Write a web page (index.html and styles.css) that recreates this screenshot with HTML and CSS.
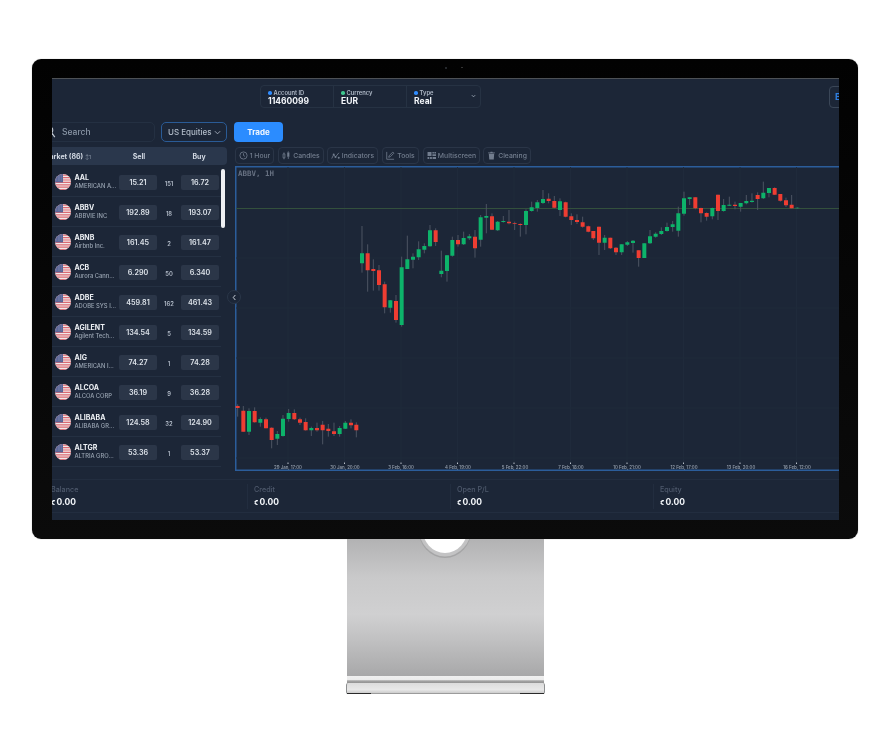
FILE: index.html
```html
<!DOCTYPE html>
<html lang="en">
<head>
<meta charset="utf-8">
<title>Trading platform on a monitor</title>
<link rel="stylesheet" href="styles.css">
</head>
<body>
<svg class="defs" width="0" height="0" aria-hidden="true">
  <defs>
    <clipPath id="flag-clip"><circle cx="8" cy="8" r="8"/></clipPath>
    <symbol id="flag" viewBox="0 0 16 16">
      <g clip-path="url(#flag-clip)">
        <rect width="16" height="16" fill="#f1e8ea"/>
        <path d="M0 1.2H16M0 3.6H16M0 6H16M0 8.4H16M0 10.8H16M0 13.2H16M0 15.6H16" stroke="#dd6a72" stroke-width="1.2"/>
        <rect width="8" height="8.4" fill="#5a6596"/>
        <path d="M1.5 2h5M1.5 4h5M1.5 6h5" stroke="#c5c8dc" stroke-width=".5" stroke-dasharray=".6 .9"/>
      </g>
    </symbol>
  </defs>
</svg>

<main class="display">
  <section class="monitor">
    <span class="camera"></span>
    <span class="sensor"></span>
    <div class="screen">
      <header class="topbar">
        <div class="account">
          <div class="account-cell">
            <div class="account-label"><i class="dot dot-blue"></i>Account ID</div>
            <div class="account-value">11460099</div>
          </div>
          <div class="account-cell">
            <div class="account-label"><i class="dot dot-green"></i>Currency</div>
            <div class="account-value">EUR</div>
          </div>
          <div class="account-cell account-cell-last">
            <div class="account-label"><i class="dot dot-blue"></i>Type</div>
            <div class="account-value">Real</div>
            <svg class="account-chevron" viewBox="0 0 6 4"><path d="M1 1l2 2 2-2"/></svg>
          </div>
        </div>
        <div class="edge-button">E</div>
      </header>

      <div class="work">
        <aside class="market">
          <div class="filters">
            <div class="search">
              <svg class="search-icon" viewBox="0 0 14 16"><circle cx="6" cy="6" r="4.2"/><path d="M9 9l3.6 5"/></svg>
              <span>Search</span>
            </div>
            <div class="select">US Equities
              <svg class="select-chevron" viewBox="0 0 8 5"><path d="M1 1l3 3 3-3"/></svg>
            </div>
          </div>
          <div class="market-head">
            <span class="head-name">Market (86) <small>↕1</small></span>
            <span class="head-price">Sell</span>
            <span class="head-gap"></span>
            <span class="head-price">Buy</span>
          </div>
          <div class="rows">
            <div class="row">
              <svg class="flag"><use href="#flag"/></svg>
              <div class="name"><b>AAL</b><span>AMERICAN A...</span></div>
              <div class="price">15.21</div><div class="qty">151</div><div class="price">16.72</div>
            </div>
            <div class="row">
              <svg class="flag"><use href="#flag"/></svg>
              <div class="name"><b>ABBV</b><span>ABBVIE INC</span></div>
              <div class="price">192.89</div><div class="qty">18</div><div class="price">193.07</div>
            </div>
            <div class="row">
              <svg class="flag"><use href="#flag"/></svg>
              <div class="name"><b>ABNB</b><span>Airbnb Inc.</span></div>
              <div class="price">161.45</div><div class="qty">2</div><div class="price">161.47</div>
            </div>
            <div class="row">
              <svg class="flag"><use href="#flag"/></svg>
              <div class="name"><b>ACB</b><span>Aurora Cann...</span></div>
              <div class="price">6.290</div><div class="qty">50</div><div class="price">6.340</div>
            </div>
            <div class="row">
              <svg class="flag"><use href="#flag"/></svg>
              <div class="name"><b>ADBE</b><span>ADOBE SYS I...</span></div>
              <div class="price">459.81</div><div class="qty">162</div><div class="price">461.43</div>
            </div>
            <div class="row">
              <svg class="flag"><use href="#flag"/></svg>
              <div class="name"><b>AGILENT</b><span>Agilent Tech...</span></div>
              <div class="price">134.54</div><div class="qty">5</div><div class="price">134.59</div>
            </div>
            <div class="row">
              <svg class="flag"><use href="#flag"/></svg>
              <div class="name"><b>AIG</b><span>AMERICAN I...</span></div>
              <div class="price">74.27</div><div class="qty">1</div><div class="price">74.28</div>
            </div>
            <div class="row">
              <svg class="flag"><use href="#flag"/></svg>
              <div class="name"><b>ALCOA</b><span>ALCOA CORP</span></div>
              <div class="price">36.19</div><div class="qty">9</div><div class="price">36.28</div>
            </div>
            <div class="row">
              <svg class="flag"><use href="#flag"/></svg>
              <div class="name"><b>ALIBABA</b><span>ALIBABA GR...</span></div>
              <div class="price">124.58</div><div class="qty">32</div><div class="price">124.90</div>
            </div>
            <div class="row">
              <svg class="flag"><use href="#flag"/></svg>
              <div class="name"><b>ALTGR</b><span>ALTRIA GRO...</span></div>
              <div class="price">53.36</div><div class="qty">1</div><div class="price">53.37</div>
            </div>
            <span class="scrollbar"></span>
          </div>
        </aside>

        <button class="collapse" type="button" aria-label="Collapse">
          <svg viewBox="0 0 6 8"><path d="M4 1L1.5 4 4 7"/></svg>
        </button>

        <section class="trade">
          <div class="trade-bar"><div class="trade-button">Trade</div></div>
          <div class="tools">
            <div class="tool tool-hour">
              <svg class="ico" viewBox="0 0 10 10"><circle cx="5" cy="5" r="4"/><path d="M5 2.6V5l1.6 1"/></svg>1 Hour
            </div>
            <div class="tool tool-candles">
              <svg class="ico" viewBox="0 0 10 10"><path d="M1.2 3.2h2v4.4h-2zM2.2 1.6v1.6M2.2 7.6v1.6"/><path class="ico-solid" d="M5.8 1.6h2.4v4.8H5.8z"/><path d="M7 .4v1.2M7 6.4v2.4"/></svg>Candles
            </div>
            <div class="tool tool-indicators">
              <svg class="ico" viewBox="0 0 10 10"><path d="M.8 8.4L3 4l2 2.6L8.8 2"/><circle class="ico-solid" cx="3" cy="4" r="1.1"/><circle class="ico-solid" cx="5" cy="6.6" r="1.1"/><circle class="ico-solid" cx="8.6" cy="7.4" r="1.1"/></svg>Indicators
            </div>
            <div class="tool tool-tools">
              <svg class="ico" viewBox="0 0 10 10"><path d="M.8 1v8.2H9"/><path d="M3 7l.5-1.8L7.6 1.2l1.2 1.2-4 4z"/></svg>Tools
            </div>
            <div class="tool tool-multi">
              <svg class="ico" viewBox="0 0 10 10"><path class="ico-solid" d="M.6 1h4.4v4.6H.6zM6 1h1.7v1.8H6zM8.2 1H10v1.8H8.2zM6 3.6h4v2H6zM.6 6.6h2v2.4h-2zM3.4 6.6h2v2.4h-2zM6.2 6.6h3.8v2.4H6.2z"/></svg>Multiscreen
            </div>
            <div class="tool tool-clean">
              <svg class="ico" viewBox="0 0 10 10"><path class="ico-solid" d="M2 3h6l-.5 6.4h-5zM1.2 1.6h2.4l.4-.8h2l.4.8h2.4v.8H1.2z"/></svg>Cleaning
            </div>
          </div>

          <div class="chart">
            <svg class="chart-svg" viewBox="235 166 640 305" width="640" height="305" role="img" aria-label="ABBV candlestick chart">
              <path class="grid" d="M288 167V462M344.500 167V462M401 167V462M457.500 167V462M514 167V462M570.500 167V462M627 167V462M683.500 167V462M740 167V462M796.500 167V462M236 258H840M236 308H840M236 358H840M236 408H840M236 458H840"/>
              <path class="price-line" d="M236 208.500H840"/>
              <text class="chart-title" x="238" y="176">ABBV, 1H</text>

              <g transform="translate(232 395) scale(.3333)">
                <path class="wick" d="M17 28V65M34 33V110M51 40V120M68 37V83M85 67V95M102 68V100M119 97V160M136 108V150M153 60V125M170 42V80M187 43V75M204 68V90M221 70V107M238 95V123M255 83V110M272 78V148M289 87V125M306 83V123M323 93V125M340 78V102M357 73V100M373 82V127"/>
                <path class="up" d="M51 48V110M85 72V83M136 117V131M153 71V123M170 54V72M238 99V106M323 99V117M340 83V101"/>
                <path class="down" d="M17 33V39M34 47V110M68 48V82M102 73V100M119 98V135M187 54V73M204 73V83M221 81V106M255 99V106M272 89V106M289 101V108M306 109V117M357 83V91M373 89V106"/>
              </g>
              <g transform="translate(350 200) scale(.3333)">
                <path class="wick" d="M36 78V218M53 133V275M70 178V272M87 195V272M104 245V340M121 300V338M138 285V368M155 170V380M172 107V207M189 160V205M206 124V180M223 130V160M240 75V140M257 85V138M274 152V232M291 165V245"/>
                <path class="up" d="M36 160V190M121 301V323M155 202V375M172 178V207M189 170V179M206 148V172M223 138V149M240 91V139M274 212V222M291 166V213"/>
                <path class="down" d="M53 160V211M70 207V213M87 211V255M104 253V322M138 303V360M257 91V126"/>
              </g>
              <g transform="translate(440 180) scale(.3333)">
                <path class="wick" d="M37 170V230M54 165V200M71 155V195M88 162V180M105 150V233M122 105V200M139 72V160M156 100V150M173 123V153M190 108V128M207 90V133M224 125V150M241 130V170M258 88V163M275 65V95M292 60V95M309 30V72M326 40V70M343 48V85M360 55V108M377 65V112M394 100V135M411 103V132M428 110V143M445 137V157"/>
                <path class="up" d="M37 180V227M71 174V193M88 169V175M122 112V179M139 108V113M173 125V151M190 123V126M258 93V135M275 82V93M292 67V84M309 57V69M360 64V90"/>
                <path class="down" d="M54 180V193M105 170V205M156 109V149M207 125V130M224 129V131M241 132V135M326 56V63M343 63V83M377 67V110M394 109V120M411 120V126M428 127V140M445 139V155"/>
              </g>
              <g transform="translate(590 175) scale(.3333)">
                <path class="wick" d="M10 168V195M27 155V240M44 180V225M61 188V222M78 216V240M95 208V240M112 198V213M129 195V233M146 226V275M163 205V249M180 165V207M197 172V188M214 157V180M231 143V170M248 138V170M265 95V185M282 50V122M299 67V90M316 67V103M333 98V142M350 112V137M367 98V133M384 59V135M401 72V110M418 65V93M435 80V103M452 84V110M469 60V88M486 55V83M503 52V105M520 20V72M537 39V67M554 37V60M571 57V80M588 68V96M605 60V100M622 97V101"/>
                <path class="up" d="M44 188V203M95 208V232M112 202V209M129 197V204M163 205V249M180 184V205M197 176V185M214 168V177M231 156V168M248 148V156M265 115V167M282 70V116M299 67V72M367 99V124M401 90V108M418 89V92M452 84V95M469 78V85M486 77V81M520 53V70M537 39V54M622 98V100"/>
                <path class="down" d="M10 168V190M27 155V203M61 188V220M78 218V232M146 226V249M316 67V100M333 99V115M350 114V125M384 59V108M435 89V93M503 60V72M554 39V59M571 57V77M588 76V91M605 89V100"/>
              </g>

              <path class="ticks" d="M288 462.500v1.500M344.500 462.500v1.500M401 462.500v1.500M457.500 462.500v1.500M514 462.500v1.500M570.500 462.500v1.500M627 462.500v1.500M683.500 462.500v1.500M740 462.500v1.500M796.500 462.500v1.500"/>
              <g class="axis">
                <text x="288" y="468.500">29 Jan, 17:00</text>
                <text x="345" y="468.500">30 Jan, 20:00</text>
                <text x="401" y="468.500">3 Feb, 16:00</text>
                <text x="458" y="468.500">4 Feb, 19:00</text>
                <text x="515" y="468.500">5 Feb, 22:00</text>
                <text x="571" y="468.500">7 Feb, 18:00</text>
                <text x="627" y="468.500">10 Feb, 21:00</text>
                <text x="684" y="468.500">12 Feb, 17:00</text>
                <text x="741" y="468.500">13 Feb, 20:00</text>
                <text x="797" y="468.500">16 Feb, 12:00</text>
              </g>
            </svg>
          </div>
        </section>
      </div>

      <footer class="stats">
        <div class="stat"><div class="stat-label">Balance</div><div class="stat-value"><small>€</small>0.00</div></div>
        <div class="stat"><div class="stat-label">Credit</div><div class="stat-value"><small>€</small>0.00</div></div>
        <div class="stat"><div class="stat-label">Open P/L</div><div class="stat-value"><small>€</small>0.00</div></div>
        <div class="stat"><div class="stat-label">Equity</div><div class="stat-value"><small>€</small>0.00</div></div>
      </footer>
    </div>
  </section>

  <div class="stand"></div>
  <div class="stand-lip"></div>
  <div class="stand-base"></div>
</main>
</body>
</html>
```
FILE: styles.css
```css
* { box-sizing: border-box; }

html, body { margin: 0; padding: 0; background: #fff; }

body {
  width: 895px;
  height: 753px;
  overflow: hidden;
  font-family: Inter, "Liberation Sans", sans-serif;
}

.defs { display: block; height: 0; }

.display {
  display: flex;
  flex-direction: column;
  align-items: center;
  width: 890px;
  padding-top: 59px;
}

/* Monitor shell */
.monitor {
  position: relative;
  width: 826px;
  height: 480px;
  padding: 19px 19px 19px 20px;
  background: linear-gradient(#020202, #0b0b0b);
  border-radius: 9px;
  box-shadow: 0 0 1px #8a8a8a;
}

.camera, .sensor {
  position: absolute;
  top: 7.500px;
  width: 2px;
  height: 2px;
  border-radius: 50%;
  background: #30343a;
}
.camera { left: 413px; }
.sensor { left: 429px; width: 1.500px; height: 1.500px; background: #3c3c3c; }

.screen {
  position: relative;
  width: 787px;
  height: 442px;
  overflow: hidden;
  background: #1c2637;
  border-top: 1px solid #4d5156;
  color: #e8edf4;
  filter: blur(.5px);
}

/* Top bar */
.topbar {
  display: flex;
  align-items: flex-start;
  height: 43px;
  padding: 6px 0 0 208px;
}

.account {
  display: flex;
  flex: none;
  width: 221px;
  height: 23px;
  border: 1px solid #263243;
  border-radius: 4px;
}

.account-cell {
  width: 73.500px;
  padding: 4px 0 0 7px;
  border-right: 1px solid #263243;
}
.account-cell-last { position: relative; border-right: 0; }

.account-label {
  display: flex;
  align-items: center;
  gap: 2px;
  font-size: 5.800px;
  line-height: 6px;
  font-weight: 600;
  color: #aeb8c6;
}

.dot { width: 3.500px; height: 3.500px; border-radius: 50%; }
.dot-blue { background: #2f8cff; }
.dot-green { background: #3fc78f; }

.account-value {
  margin-top: 1px;
  font-size: 8.500px;
  line-height: 9px;
  font-weight: 700;
  color: #f2f5f9;
}

.account-chevron {
  position: absolute;
  right: 4px;
  top: 8px;
  width: 5px;
  height: 4px;
  fill: none;
  stroke: #a3aebd;
  stroke-width: 1;
}

.edge-button {
  flex: none;
  width: 40px;
  height: 22px;
  margin: 1px 0 0 348px;
  padding-left: 5px;
  border: 1px solid #3a4657;
  border-radius: 4px;
  font-size: 9px;
  font-weight: 700;
  line-height: 20px;
  color: #2f7fe0;
}

/* Working area */
.work {
  position: relative;
  display: flex;
  height: 358px;
  margin-left: -12px;
}

.market { flex: none; width: 187px; }

.filters {
  display: flex;
  justify-content: space-between;
  height: 20px;
}

.search {
  display: flex;
  align-items: center;
  gap: 6px;
  width: 115px;
  height: 20px;
  padding-left: 2px;
  border: 1px solid #243042;
  border-radius: 5px;
  font-size: 8.500px;
  font-weight: 500;
  color: #8b97a7;
}
.search-icon {
  flex: none;
  width: 12px;
  height: 14px;
  margin-left: 1px;
  fill: none;
  stroke: #c4cbd5;
  stroke-width: 1.400;
}

.select {
  display: flex;
  align-items: center;
  justify-content: space-between;
  width: 66px;
  height: 20px;
  padding: 0 5px 0 6px;
  border: 1px solid #2a5b96;
  border-radius: 5px;
  font-size: 8px;
  font-weight: 500;
  color: #b3bdca;
}
.select-chevron {
  width: 7px;
  height: 5px;
  fill: none;
  stroke: #aab4c2;
  stroke-width: 1;
}

.market-head {
  display: flex;
  align-items: center;
  height: 18px;
  margin-top: 5px;
  padding-left: 3px;
  background: #2a374c;
  border-radius: 4px;
  font-size: 7px;
  font-weight: 700;
  color: #d0d7e1;
}
.head-name { width: 77px; }
.head-name small { font-size: 5px; font-weight: 400; color: #8d98a8; }
.head-price { width: 38px; text-align: center; }
.head-gap { width: 22px; }

.rows { position: relative; margin-top: 2px; }

.row {
  display: flex;
  align-items: center;
  width: 181px;
  height: 30px;
  padding-left: 15px;
  border-bottom: 1px solid #243042;
}

.flag { flex: none; width: 16px; height: 16px; }

.name {
  display: flex;
  flex: none;
  flex-direction: column;
  width: 48px;
  padding-left: 3.500px;
  white-space: nowrap;
  overflow: hidden;
}
.name b { font-size: 7px; line-height: 9px; font-weight: 700; color: #eef1f5; }
.name span { font-size: 5.800px; line-height: 8px; font-weight: 500; color: #9aa5b3; }

.price {
  flex: none;
  width: 38px;
  height: 15px;
  margin-top: 1px;
  background: #2b3648;
  border-radius: 2px;
  font-size: 7.200px;
  font-weight: 600;
  line-height: 15px;
  text-align: center;
  color: #dde3ea;
}

.qty {
  flex: none;
  width: 24px;
  font-size: 5.800px;
  font-weight: 600;
  text-align: center;
  color: #b3bcc9;
  padding-top: 3px;
}

.scrollbar {
  position: absolute;
  left: 181px;
  top: 2px;
  width: 3.500px;
  height: 59px;
  background: #eef0f3;
  border-radius: 2px;
}

.collapse {
  position: absolute;
  left: 187px;
  top: 168px;
  width: 14px;
  height: 14px;
  padding: 3px 4px;
  background: #1c2637;
  border: 1px solid #2a3648;
  border-radius: 50%;
  z-index: 2;
}
.collapse svg {
  display: block;
  width: 5px;
  height: 7px;
  fill: none;
  stroke: #d6dce4;
  stroke-width: 1.100;
}

/* Chart column */
.trade { flex: none; width: 660px; margin-left: 7px; }

.trade-bar { height: 20px; }

.trade-button {
  width: 49px;
  height: 20px;
  background: #2b8cff;
  border-radius: 4px;
  font-size: 8px;
  font-weight: 700;
  line-height: 20px;
  text-align: center;
  color: #f2f7ff;
}

.tools {
  display: flex;
  height: 17px;
  margin: 5px 0 2px 1px;
}

.tool {
  display: flex;
  align-items: center;
  justify-content: center;
  gap: 2px;
  height: 17px;
  border: 1px solid #2a3547;
  border-radius: 4px;
  font-size: 6.800px;
  font-weight: 500;
  color: #727d8e;
  white-space: nowrap;
}
.tool-hour { width: 39px; }
.tool-candles { width: 46px; margin-left: 4px; }
.tool-indicators { width: 51px; margin-left: 3px; }
.tool-tools { width: 37px; margin-left: 4px; }
.tool-multi { width: 57px; margin-left: 4px; }
.tool-clean { width: 48px; margin-left: 3px; }

.ico {
  flex: none;
  width: 9px;
  height: 9px;
  fill: none;
  stroke: #727d8e;
  stroke-width: .9;
}
.ico-solid { fill: #727d8e; stroke: none; }

.chart {
  width: 640px;
  height: 305px;
  margin-left: 1px;
  background: #1c2637;
  box-shadow: inset 0 0 0 1.500px #2b5d9b;
}
.chart-svg { display: block; }

.grid { fill: none; stroke: #1f2a3b; stroke-width: 1; }
.price-line { fill: none; stroke: #33503c; stroke-width: 1; }
.wick { fill: none; stroke: #4c5462; stroke-width: 3; }
.up { fill: none; stroke: #0db36a; stroke-width: 12; }
.down { fill: none; stroke: #ef3d32; stroke-width: 12; }
.ticks { fill: none; stroke: #b9c0ca; stroke-width: 1; }

.chart-title {
  font-family: "DejaVu Sans Mono", "Liberation Mono", monospace;
  font-size: 7.500px;
  font-weight: 700;
  fill: #667081;
}

.axis text {
  font-size: 4.400px;
  font-weight: 500;
  fill: #98a2b0;
  text-anchor: middle;
}

/* Account summary */
.stats {
  display: grid;
  grid-template-columns: repeat(4, 203px);
  height: 34px;
  margin-left: -7px;
  margin-top: -1px;
  padding-top: 4px;
  border-top: 1px solid #222d3f;
  border-bottom: 1px solid #222d3f;
}

.stat {
  height: 25px;
  padding-left: 6px;
  border-right: 1px solid #222d3f;
}
.stat:last-child { border-right: 0; }

.stat-label {
  padding-top: 1px;
  font-size: 7.200px;
  font-weight: 500;
  line-height: 10px;
  color: #4f5a6d;
}
.stat-value {
  margin-top: 2px;
  font-size: 8.500px;
  font-weight: 700;
  line-height: 10px;
  color: #f2f5f9;
}
.stat-value small { font-size: 6.500px; margin-right: 1px; }

/* Stand */
.stand {
  position: relative;
  flex: none;
  width: 197px;
  height: 137px;
  overflow: hidden;
  background: linear-gradient(#b2b2b3, #c9c9ca 28%, #d0d0d1 55%, #c2c2c3 72%, #a8a8a9);
}
.stand::before {
  content: "";
  position: absolute;
  left: 75.500px;
  top: -38px;
  width: 46px;
  height: 52px;
  background: #fff;
  border-radius: 50%;
  box-shadow: 0 0 0 3.500px #c3c3c4, 0 1px 0 4px #a5a5a6;
}

.stand-lip {
  flex: none;
  width: 197px;
  height: 7px;
  background: linear-gradient(#f0f0f0 0, #ececec 50%, #a4a4a4 70%, #929292 100%);
}

.stand-base {
  position: relative;
  flex: none;
  width: 199px;
  height: 11px;
  background: linear-gradient(#dcdcdc, #e8e8e8 60%, #cfcfcf 88%, #7c7c7c);
  border-left: 1.500px solid #8d8f90;
  border-right: 1.500px solid #8d8f90;
  border-radius: 2px;
}
.stand-base::before, .stand-base::after {
  content: "";
  position: absolute;
  bottom: 0;
  width: 24px;
  height: 1.500px;
  background: #2a2a2a;
}
.stand-base::before { left: 0; }
.stand-base::after { right: 0; }
```
